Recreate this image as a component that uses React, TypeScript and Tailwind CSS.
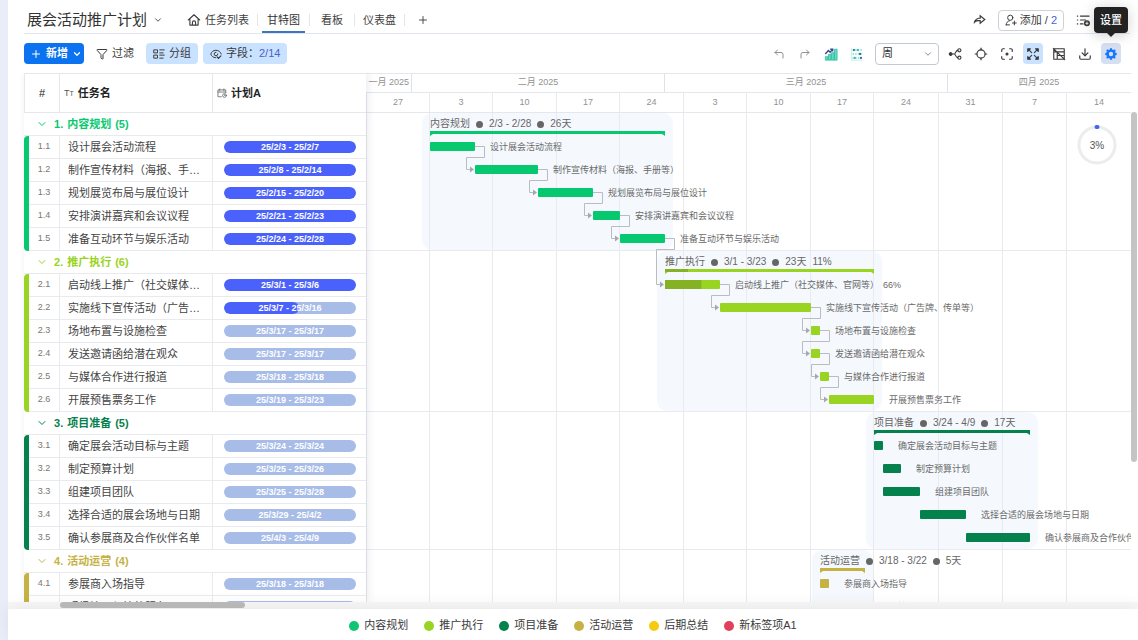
import type { ReactNode } from "react";
import { ChevronDown, CornerUpLeft, CornerUpRight, Download, Funnel, Locate, Plus } from "lucide-react";
import { BsGearFill } from "react-icons/bs";
import { RiShareForwardLine } from "react-icons/ri";

type Task = {
  name: string;
  start: string;
  end: string;
  done?: number;
  progress?: number;
  linked?: boolean;
};

type Group = {
  title: string;
  color: string;
  dark: string;
  start: string;
  end: string;
  summary: string[];
  progress?: number;
  total: number;
  tasks: Task[];
};

const ROW = 23;

const groups: Group[] = [
  {
    title: "内容规划",
    color: "#06c96f",
    dark: "#05a85d",
    start: "2/3",
    end: "2/28",
    summary: ["2/3 - 2/28", "26天"],
    total: 5,
    tasks: [
      { name: "设计展会活动流程", start: "2/3", end: "2/7", done: 100, linked: true },
      { name: "制作宣传材料（海报、手册等）", start: "2/8", end: "2/14", done: 100, linked: true },
      { name: "规划展览布局与展位设计", start: "2/15", end: "2/20", done: 100, linked: true },
      { name: "安排演讲嘉宾和会议议程", start: "2/21", end: "2/23", done: 100, linked: true },
      { name: "准备互动环节与娱乐活动", start: "2/24", end: "2/28", done: 100, linked: true },
    ],
  },
  {
    title: "推广执行",
    color: "#99d422",
    dark: "#84b224",
    start: "3/1",
    end: "3/23",
    summary: ["3/1 - 3/23", "23天"],
    progress: 11,
    total: 6,
    tasks: [
      { name: "启动线上推广（社交媒体、官网等）", start: "3/1", end: "3/6", done: 100, progress: 66, linked: true },
      { name: "实施线下宣传活动（广告牌、传单等）", start: "3/7", end: "3/16", done: 57, linked: true },
      { name: "场地布置与设施检查", start: "3/17", end: "3/17", linked: true },
      { name: "发送邀请函给潜在观众", start: "3/17", end: "3/17", linked: true },
      { name: "与媒体合作进行报道", start: "3/18", end: "3/18", linked: true },
      { name: "开展预售票务工作", start: "3/19", end: "3/23" },
    ],
  },
  {
    title: "项目准备",
    color: "#04814c",
    dark: "#036b3f",
    start: "3/24",
    end: "4/9",
    summary: ["3/24 - 4/9", "17天"],
    total: 5,
    tasks: [
      { name: "确定展会活动目标与主题", start: "3/24", end: "3/24" },
      { name: "制定预算计划", start: "3/25", end: "3/26" },
      { name: "组建项目团队", start: "3/25", end: "3/28" },
      { name: "选择合适的展会场地与日期", start: "3/29", end: "4/2" },
      { name: "确认参展商及合作伙伴名单", start: "4/3", end: "4/9" },
    ],
  },
  {
    title: "活动运营",
    color: "#c5b243",
    dark: "#a89634",
    start: "3/18",
    end: "3/22",
    summary: ["3/18 - 3/22", "5天"],
    total: 4,
    tasks: [
      { name: "参展商入场指导", start: "3/18", end: "3/18" },
      { name: "现场注册与接待服务", start: "3/19", end: "3/19" },
    ],
  },
];

const legend = [
  { label: "内容规划", color: "#10c572" },
  { label: "推广执行", color: "#99d422" },
  { label: "项目准备", color: "#04814c" },
  { label: "活动运营", color: "#c5b243" },
  { label: "后期总结", color: "#f5cb12" },
  { label: "新标签项A1", color: "#e0405a" },
];

const months = [
  { label: "二月 2025", start: "2/1" },
  { label: "三月 2025", start: "3/1" },
  { label: "四月 2025", start: "4/1" },
];

const weeks = ["27", "3", "10", "17", "24", "3", "10", "17", "24", "31", "7", "14"];
const weekEdges = [0, 63, 126, 190, 253, 317, 380, 444, 507, 572, 636, 700, 765];

// Days counted from Monday 27 January, the first visible week.
const monthOffset: Record<string, number> = { "1": -27, "2": 4, "3": 32, "4": 63 };

function toX(date: string, endOfDay = false) {
  const [month, day] = date.split("/");
  const n = monthOffset[month] + Number(day) + (endOfDay ? 1 : 0);
  const week = Math.floor(n / 7);
  const width = weekEdges[week + 1] - weekEdges[week];
  return Math.round(weekEdges[week] + ((n % 7) * width) / 7 + 0.5);
}

let cursor = 0;
const sections = groups.map((group) => {
  const top = cursor;
  cursor += (group.tasks.length + 1) * ROW;
  return {
    ...group,
    top,
    height: (group.tasks.length + 1) * ROW,
    left: toX(group.start),
    right: toX(group.end, true),
    bars: group.tasks.map((task, i) => ({
      ...task,
      left: toX(task.start),
      right: toX(task.end, true),
      top: top + (i + 1) * ROW,
    })),
  };
});
const chartHeight = cursor;
const bars = sections.flatMap((section) => section.bars);

function Svg({ children, className = "size-3.5" }: { children: ReactNode; className?: string }) {
  return (
    <svg aria-hidden="true" className={className} fill="none" stroke="currentColor" strokeLinecap="round" strokeLinejoin="round" strokeWidth="1.3" viewBox="0 0 16 16">
      {children}
    </svg>
  );
}

const HomeIcon = () => (
  <Svg>
    <path d="M1.500 8 8 2l6.500 6M3.300 7v6.800h9.400V7M6.200 13.600v-2.800a1.800 1.800 0 0 1 3.600 0v2.800" />
  </Svg>
);

const GroupIcon = () => (
  <Svg className="size-3">
    <path d="M1.500 2.500h4.500v4h-4.500zM1.500 9.500h4.500v4h-4.500zM9 2.500h6M9 6.500h4.500M9 9.500h6M9 13.500h4.500" />
  </Svg>
);

const EyeIcon = () => (
  <Svg className="size-3">
    <path d="M7.500 13C4.500 13 2 10.800 1 8c1-2.800 3.500-5 7-5s6 2.200 7 5M8 5.600A2.400 2.400 0 1 0 10.400 8" />
    <path d="m9.500 12 1.800 1.800L14.500 10.500" strokeWidth="1.600" />
  </Svg>
);

const UserAddIcon = () => (
  <Svg className="size-3">
    <circle cx="7" cy="5" r="3.500" />
    <path d="M1.500 14.500c0-3 2-4.800 4.500-5.500M1.500 14.500H6M12.500 9.500v5M10 12h5" />
  </Svg>
);

const ListAddIcon = () => (
  <Svg>
    <path d="M1.500 3.500h.5M5 3.500h10M1.500 8h.5M5 8h6M1.500 12.500h.5M5 12.500h3" />
    <circle cx="12.500" cy="11.800" fill="currentColor" r="2.800" />
    <path d="M12.500 10.500v2.600M11.200 11.800h2.600" stroke="#fff" strokeWidth="1" />
  </Svg>
);

const ColumnChartIcon = () => (
  <svg aria-hidden="true" className="size-3.5" viewBox="0 0 16 16">
    <path d="M1.500 11h3v4h-3zM5 8.500h3V15H5zM8.500 6.500h3V15h-3zM12 2.500h3V15h-3z" fill="#5fdcc0" stroke="#2bb596" strokeWidth="0.800" />
    <path d="m1.500 8 3.500-4 2 2 2.500-3M7 2.300h3v2.700" fill="none" stroke="#2c4390" strokeWidth="1.400" />
  </svg>
);

const PlanIcon = () => (
  <svg aria-hidden="true" className="size-3.5" fill="none" viewBox="0 0 16 16">
    <path d="M1.500 1v14M1.500 15h13" stroke="#bfe9e4" />
    <path d="M3 3.500h12M3 8h12M3 12.500h12" stroke="#2ac0ae" strokeDasharray="1.500 1.500" strokeWidth="1.200" />
    <circle cx="4.500" cy="3.500" fill="#14837e" r="1.300" />
    <circle cx="9" cy="3.500" fill="#2ac0ae" r="1.300" />
    <circle cx="11.500" cy="8" fill="#14837e" r="1.300" />
    <circle cx="5.500" cy="12.500" fill="#2ac0ae" r="1.300" />
    <circle cx="12.500" cy="12.500" fill="#3d5fc4" r="1.300" />
  </svg>
);

const BranchIcon = () => (
  <Svg>
    <circle cx="3" cy="8" fill="currentColor" r="1.500" />
    <circle cx="13" cy="3.800" r="1.800" />
    <circle cx="13" cy="12.200" r="1.800" />
    <path d="M4.500 8H7c2 0 1.500-4.200 4.200-4.200M7 8c2 0 1.500 4.200 4.200 4.200" />
  </Svg>
);

const FocusIcon = () => (
  <Svg>
    <path d="M2 5V3.500A1.500 1.500 0 0 1 3.500 2H5M11 2h1.500A1.500 1.500 0 0 1 14 3.500V5M14 11v1.500a1.500 1.500 0 0 1-1.500 1.500H11M5 14H3.500A1.500 1.500 0 0 1 2 12.500V11" />
    <circle cx="8" cy="8" fill="currentColor" r="1.100" />
  </Svg>
);

const ExpandIcon = () => (
  <Svg>
    <path d="M2 2h3L2 5zM14 2v3l-3-3zM14 14h-3l3-3zM2 14v-3l3 3z" fill="currentColor" />
    <path d="m3 3 3.500 3.500M13 3 9.500 6.500M13 13 9.500 9.500M3 13l3.500-3.500" />
  </Svg>
);

const TableOffIcon = () => (
  <Svg>
    <path d="M2 2h12v12H2zM2 5.500h12M6 5.500V14M6 9.700h8M1.500 1.500l13 13" />
  </Svg>
);

const CalendarIcon = () => (
  <Svg className="size-2.5 text-[#666]">
    <path d="M7 14H1.500V3H14v4.500M1.500 6.500H14M4.500 1.500v3M11 1.500v3" />
    <circle cx="12" cy="12" r="3" />
    <path d="M12 10.800V12h1" />
  </Svg>
);

const toolButton = "flex h-[21px] w-5 items-center justify-center rounded-sm";

function TopBar() {
  const tab = "flex h-full items-center whitespace-nowrap text-[#3f3f3f]";
  const divider = <span className="h-3 w-px bg-[#e3e6ea]" />;
  return (
    <header className="mr-2 ml-4 flex h-[34px] items-center border-b border-[#e1e6ee] pt-[7px]">
      <h1 className="pl-[3px]">
        <button className="flex items-center gap-1.5 text-[15px] whitespace-nowrap text-[#333]" type="button">
          展会活动推广计划
          <ChevronDown className="size-2.5" />
        </button>
      </h1>
      <nav className="ml-6 flex h-full items-center gap-2">
        <a className={`${tab} gap-1`} href="#list">
          <HomeIcon />
          任务列表
        </a>
        {divider}
        <a aria-current="page" className="-mx-1 flex h-full items-center border-b-2 border-[#3c76bd] px-[5px] pt-0.5 whitespace-nowrap text-[#333]" href="#gantt">
          甘特图
        </a>
        {divider}
        <a className={`${tab} px-[3px]`} href="#board">
          看板
        </a>
        {divider}
        <a className={tab} href="#dashboard">
          仪表盘
        </a>
        {divider}
        <button aria-label="添加视图" className="pl-1" type="button">
          <Plus className="size-3" strokeWidth={1.8} />
        </button>
      </nav>
      <div className="mr-10 ml-auto flex items-center gap-3">
        <button aria-label="分享" type="button">
          <RiShareForwardLine className="size-3.5" />
        </button>
        <button className="flex h-[21px] items-center gap-[3px] rounded border border-[#cdd1d8] px-1.5 whitespace-nowrap" type="button">
          <UserAddIcon />
          <span>
            添加 / <span className="text-[#4763d2]">2</span>
          </span>
        </button>
        <button aria-label="列表" type="button">
          <ListAddIcon />
        </button>
      </div>
    </header>
  );
}

function Toolbar() {
  return (
    <div className="flex h-[39px] items-center pr-[17px] pl-4 whitespace-nowrap">
      <button className="flex h-[21px] items-center gap-1 rounded bg-[#0b72f0] pr-0.5 pl-1.5 font-bold text-white" type="button">
        <Plus className="size-3" />
        新增
        <ChevronDown className="size-2.5" strokeWidth={3} />
      </button>
      <button className="ml-3 flex h-[21px] items-center gap-1" type="button">
        <Funnel className="size-3" />
        过滤
      </button>
      <button className="ml-3 flex h-[21px] items-center gap-1 rounded bg-[#c9e2ff] px-[7px]" type="button">
        <GroupIcon />
        分组
      </button>
      <button className="ml-[5px] flex h-[21px] items-center gap-1 rounded bg-[#c9e2ff] px-[7px]" type="button">
        <EyeIcon />
        <span>
          字段：<span className="text-[#4a62c6]">2/14</span>
        </span>
      </button>
      <div className="ml-auto flex items-center gap-1.5">
        <button aria-label="撤销" className={`${toolButton} text-[#8f8f8f]`} type="button">
          <CornerUpLeft className="size-3" />
        </button>
        <button aria-label="重做" className={`${toolButton} text-[#8f8f8f]`} type="button">
          <CornerUpRight className="size-3" />
        </button>
        <button aria-label="图表" className={toolButton} type="button">
          <ColumnChartIcon />
        </button>
        <button aria-label="基线" className={toolButton} type="button">
          <PlanIcon />
        </button>
        <div className="relative ml-0.5">
          <select aria-label="时间刻度" className="block h-[22px] w-16 appearance-none rounded border border-[#c4c8d0] bg-white pl-1.5 text-[#333]" defaultValue="周">
            <option>周</option>
          </select>
          <ChevronDown className="pointer-events-none absolute top-1.5 right-1.5 size-2.5 text-[#777]" />
        </div>
        <button aria-label="依赖" className={toolButton} type="button">
          <BranchIcon />
        </button>
        <button aria-label="定位今天" className={toolButton} type="button">
          <Locate className="size-3.5" />
        </button>
        <button aria-label="聚焦" className={toolButton} type="button">
          <FocusIcon />
        </button>
        <button aria-label="全屏" className={`${toolButton} bg-[#c9e2ff]`} type="button">
          <ExpandIcon />
        </button>
        <button aria-label="隐藏表格" className={toolButton} type="button">
          <TableOffIcon />
        </button>
        <button aria-label="导出" className={toolButton} type="button">
          <Download className="size-3.5" />
        </button>
        <div className="relative">
          <button aria-describedby="settings-tip" aria-label="设置" className={`${toolButton} bg-[#d6dfef] text-[#1677ff]`} type="button">
            <BsGearFill className="size-3" />
          </button>
          <div className="absolute bottom-full left-1/2 z-20 mb-2.5 -translate-x-1/2" id="settings-tip" role="tooltip">
            <div className="rounded bg-[#222] px-1.5 py-1 leading-[18px] font-medium text-white shadow-[0_2px_14px_rgba(0,0,0,0.2)]">设置</div>
            <div className="absolute top-full left-1/2 -translate-x-1/2 border-x-4 border-t-4 border-x-transparent border-t-[#222]" />
          </div>
        </div>
      </div>
    </div>
  );
}

function TaskTable() {
  const line = "border-b border-[#e8eaed]";
  return (
    <div className="z-10 shrink-0 bg-white shadow-[2px_0_8px_rgba(40,60,110,0.1)]">
      <table className="w-[342px] table-fixed border-separate border-spacing-0">
        <colgroup>
          <col className="w-[5px]" />
          <col className="w-[31px]" />
          <col className="w-[153px]" />
          <col className="w-[153px]" />
        </colgroup>
        <thead>
          <tr className="h-10 text-left text-[#222]">
            <th className="border border-[#e4e7eb] p-0 text-center font-medium" colSpan={2}>
              #
            </th>
            <th className="border-y border-r border-[#e4e7eb] p-0 pl-1">
              <span className="flex items-center gap-1">
                <span className="text-[9px] leading-none font-normal text-[#555]">
                  T<span className="text-[7px]">T</span>
                </span>
                任务名
              </span>
            </th>
            <th className="border-y border-[#e4e7eb] p-0 pl-1">
              <span className="flex items-center gap-1">
                <CalendarIcon />
                计划A
              </span>
            </th>
          </tr>
        </thead>
        {sections.map((section, g) => (
          <tbody key={section.title}>
            <tr className="h-[23px]">
              <th className={`${line} p-0 text-left`} colSpan={4} scope="colgroup" style={{ color: section.color }}>
                <button className="flex items-center gap-1.5 pl-3 font-bold" type="button">
                  <ChevronDown className="size-3" strokeWidth={2} />
                  <span className="flex gap-1">
                    <span>{g + 1}.</span>
                    <span>{section.title}</span>
                    <span>({section.total})</span>
                  </span>
                </button>
              </th>
            </tr>
            {section.tasks.map((task, i) => (
              <tr className="h-[23px]" key={task.name}>
                {i === 0 ? <td className="rounded-l p-0" rowSpan={section.tasks.length} style={{ backgroundColor: section.color }} /> : null}
                <td className={`${line} border-r p-0 text-center text-[9px] text-[#777]`}>
                  {g + 1}.{i + 1}
                </td>
                <td className={`${line} border-r p-0 pr-1 pl-2`}>
                  <div className="truncate leading-[18px] text-[#444]">{task.name}</div>
                </td>
                <td className={`${line} p-0 pr-2.5 pl-[11px]`}>
                  <div className="relative h-3 overflow-hidden rounded-full bg-[#a8bce8] text-center text-[9px] leading-3 font-bold text-white">
                    <div className="absolute inset-y-0 left-0 rounded-full bg-[#4a62fb]" style={{ width: `${task.done ?? 0}%` }} />
                    <span className="relative">
                      25/{task.start} - 25/{task.end}
                    </span>
                  </div>
                </td>
              </tr>
            ))}
          </tbody>
        ))}
      </table>
    </div>
  );
}

function Timeline() {
  return (
    <div className="relative h-10 border-y border-[#e4e7eb] text-[9px] text-[#929292]">
      <div className="flex h-[19px] items-center border-b border-[#e4e7eb]">
        <div className="flex h-full shrink-0 items-center justify-end overflow-hidden pr-0.5 whitespace-nowrap" style={{ width: toX("2/1") - 1 }}>
          一月 2025
        </div>
        {months.map((month, i) => {
          const end = i + 1 < months.length ? toX(months[i + 1].start) : weekEdges[12];
          return (
            <div className="flex h-full shrink-0 items-center justify-center border-l border-[#dfe2e6]" key={month.label} style={{ width: end - toX(month.start) }}>
              {month.label}
            </div>
          );
        })}
      </div>
      <div className="flex h-[19px]">
        {weeks.map((week, i) => (
          <div className="flex shrink-0 items-center justify-center border-l border-[#e8eaed]" key={weekEdges[i]} style={{ width: weekEdges[i + 1] - weekEdges[i] }}>
            {week}
          </div>
        ))}
      </div>
    </div>
  );
}

function ChartDrawing() {
  return (
    <svg aria-hidden="true" className="absolute top-0 left-0" height={chartHeight} width={weekEdges[12]}>
      {sections.map((section) => (
        <g key={section.title}>
          <rect fill="#e6effc" fillOpacity="0.4" height={section.height - 1} rx="10" width={section.right - section.left + 16} x={section.left - 8} y={section.top} />
          <path
            d={`M${section.left} ${section.top + 18}H${section.right}v5l-3 -2H${section.left + 3}l-3 2z`}
            fill={section.color}
          />
          {section.progress ? (
            <rect fill={section.dark} height="3" width={((section.right - section.left) * section.progress) / 100} x={section.left} y={section.top + 18} />
          ) : null}
        </g>
      ))}
      {bars.map((bar, i) => {
        const next = bars[i + 1];
        if (!bar.linked || !next) return null;
        return (
          <g key={bar.name}>
            <path
              d={`M${bar.right} ${bar.top + 10.5}h9.500V${bar.top + 21.5}H${next.left - 8.5}V${next.top + 10.5}h4`}
              fill="none"
              stroke="#b9bcc2"
            />
            <path d={`M${next.left - 5} ${next.top + 7.5}l4 3l-4 3z`} fill="#a6a8ae" />
          </g>
        );
      })}
      {sections.map((section) =>
        section.bars.map((bar) => (
          <g key={bar.name}>
            <rect fill={section.color} height="9" rx="1" width={bar.right - bar.left} x={bar.left} y={bar.top + 6} />
            {bar.progress ? (
              <rect fill={section.dark} height="9" width={((bar.right - bar.left) * bar.progress) / 100} x={bar.left} y={bar.top + 6} />
            ) : null}
          </g>
        )),
      )}
    </svg>
  );
}

function GanttChart() {
  return (
    <div className="flex min-w-0 flex-1 flex-col overflow-hidden">
      <Timeline />
      <div className="relative flex-1">
        <div className="flex h-full">
          {weeks.map((_, i) => (
            <div className="shrink-0 border-l border-[#e9eaec]" key={weekEdges[i]} style={{ width: weekEdges[i + 1] - weekEdges[i] }} />
          ))}
        </div>
        {sections.slice(1).map((section) => (
          <div className="absolute inset-x-0 border-t border-[#e8eaed]" key={section.title} style={{ top: section.top - 1 }} />
        ))}
        <ChartDrawing />
        {sections.map((section) => (
          <div
            className="absolute flex h-[23px] items-start gap-1.5 pt-1 text-[10px] leading-[14px] whitespace-nowrap text-[#666]"
            key={section.title}
            style={{ left: section.left, top: section.top }}
          >
            <span>{section.title}</span>
            {section.summary.map((text) => (
              <span className="flex items-center gap-1.5" key={text}>
                <span className="size-[7px] rounded-full bg-[#666]" />
                {text}
              </span>
            ))}
            {section.progress ? <span>{section.progress}%</span> : null}
          </div>
        ))}
        {bars.map((bar) => (
          <div
            className="absolute flex h-[23px] items-center gap-1 pl-[15px] text-[9px] whitespace-nowrap text-[#6a6a6a]"
            key={bar.name}
            style={{ left: bar.right, top: bar.top }}
          >
            <span>{bar.name}</span>
            {bar.progress ? <span>{bar.progress}%</span> : null}
          </div>
        ))}
        <div className="absolute top-3 right-3.5 flex size-10 items-center justify-center">
          <svg aria-hidden="true" className="absolute inset-0" fill="none" viewBox="0 0 40 40">
            <circle cx="20" cy="20" fill="#fff" r="18" stroke="#ececec" strokeWidth="3" />
            <path d="M19.500 2h1" stroke="#4763f0" strokeLinecap="round" strokeWidth="4" />
          </svg>
          <span className="relative text-[10px] text-[#555]">3%</span>
        </div>
      </div>
    </div>
  );
}

export default function App() {
  return (
    <div className="flex h-screen overflow-hidden bg-white font-['Liberation_Sans','Noto_Sans_CJK_SC',sans-serif] text-[11px] text-[#3a3a3a]" lang="zh-CN">
      <div className="w-2 shrink-0 bg-[#e8edf7]" />
      <main className="flex min-w-0 flex-1 flex-col">
        <TopBar />
        <Toolbar />
        <div className="flex min-h-0 flex-1 overflow-hidden pl-4">
          <TaskTable />
          <GanttChart />
          <div className="w-[7px] shrink-0 pt-[39px]">
            <div className="h-[350px] w-1.5 rounded-full bg-[#c4c4c4]" />
          </div>
        </div>
        <div className="h-[7px] shrink-0 bg-[#f8f8f9] pl-[52px]">
          <div className="h-1.5 w-[185px] rounded-full bg-[#bdbdbd]" />
        </div>
        <footer className="z-20 flex h-[31px] shrink-0 items-center justify-center gap-4 bg-white pt-0.5 shadow-[0_-4px_16px_rgba(0,0,0,0.06)]">
          {legend.map((item) => (
            <span className="flex items-center gap-[5px] whitespace-nowrap" key={item.label}>
              <span className="size-2.5 rounded-full" style={{ backgroundColor: item.color }} />
              {item.label}
            </span>
          ))}
        </footer>
      </main>
    </div>
  );
}
